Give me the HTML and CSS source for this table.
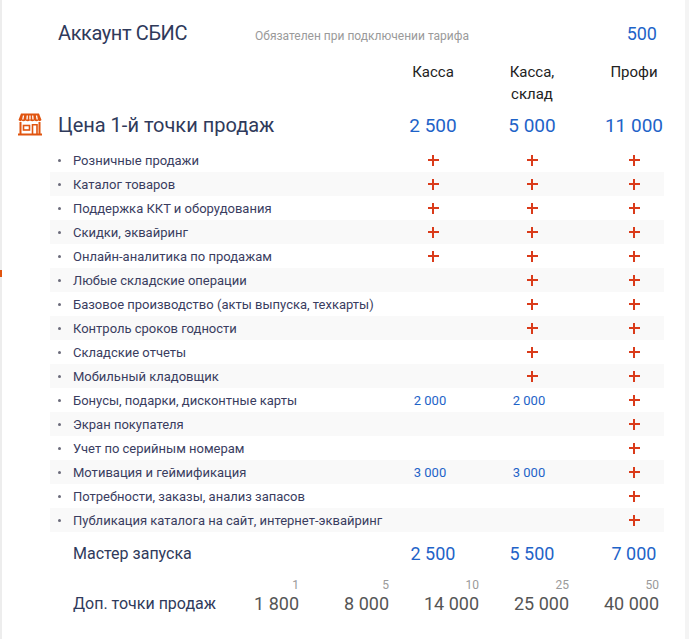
FILE: index.html
```html
<!DOCTYPE html>
<html lang="ru">
<head>
<meta charset="utf-8">
<title>Тарифы</title>
<link rel="stylesheet" href="styles.css">
</head>
<body>
<div class="page">
  <span class="edge-mark"></span>
  <div class="account">
    <span class="acc-title">Аккаунт СБИС</span>
    <span class="acc-note">Обязателен при подключении тарифа</span>
    <span class="acc-price">500</span>
  </div>

  <div class="grid head">
    <div></div>
    <div class="col">Касса</div>
    <div class="col">Касса,<br>склад</div>
    <div class="col">Профи</div>
  </div>

  <div class="grid price">
    <div class="price-label">
      <svg class="shop" width="26" height="24" viewBox="0 0 26 24">
        <path d="M4 1.5 H22 L24.5 8 Q23 10 21.5 8.5 Q19.5 10 17.5 8.5 Q15.3 10 13 8.5 Q10.7 10 8.5 8.5 Q6.5 10 4.5 8.5 Q3 10 1.5 8 Z" fill="#e0540f"/>
        <path d="M6.5 3.5 L5.8 7.5 M10.3 3.5 L10 7.5 M13 3.5 V7.5 M15.7 3.5 L16 7.5 M19.5 3.5 L20.2 7.5" stroke="#fff" stroke-width="1.3"/>
        <path d="M3.5 10 V22.5 M22.5 10 V22.5 M1 22.5 H25" stroke="#e0540f" stroke-width="2" fill="none"/>
        <rect x="6.5" y="13.5" width="6" height="4.5" stroke="#e0540f" stroke-width="1.6" fill="none"/>
        <path d="M15.5 22 V12.8 H20 V22" stroke="#e0540f" stroke-width="1.6" fill="none"/>
      </svg>
      <span>Цена 1-й точки продаж</span>
    </div>
    <div class="num">2 500</div>
    <div class="num">5 000</div>
    <div class="num">11 000</div>
  </div>

  <ul class="features">
    <li class="grid row"><span class="feat">Розничные продажи</span><span class="plus"></span><span class="plus"></span><span class="plus"></span></li>
    <li class="grid row"><span class="feat">Каталог товаров</span><span class="plus"></span><span class="plus"></span><span class="plus"></span></li>
    <li class="grid row"><span class="feat">Поддержка ККТ и оборудования</span><span class="plus"></span><span class="plus"></span><span class="plus"></span></li>
    <li class="grid row"><span class="feat">Скидки, эквайринг</span><span class="plus"></span><span class="plus"></span><span class="plus"></span></li>
    <li class="grid row"><span class="feat">Онлайн-аналитика по продажам</span><span class="plus"></span><span class="plus"></span><span class="plus"></span></li>
    <li class="grid row"><span class="feat">Любые складские операции</span><span class="empty"></span><span class="plus"></span><span class="plus"></span></li>
    <li class="grid row"><span class="feat">Базовое производство (акты выпуска, техкарты)</span><span class="empty"></span><span class="plus"></span><span class="plus"></span></li>
    <li class="grid row"><span class="feat">Контроль сроков годности</span><span class="empty"></span><span class="plus"></span><span class="plus"></span></li>
    <li class="grid row"><span class="feat">Складские отчеты</span><span class="empty"></span><span class="plus"></span><span class="plus"></span></li>
    <li class="grid row"><span class="feat">Мобильный кладовщик</span><span class="empty"></span><span class="plus"></span><span class="plus"></span></li>
    <li class="grid row"><span class="feat">Бонусы, подарки, дисконтные карты</span><span class="small-num">2 000</span><span class="small-num">2 000</span><span class="plus"></span></li>
    <li class="grid row"><span class="feat">Экран покупателя</span><span class="empty"></span><span class="empty"></span><span class="plus"></span></li>
    <li class="grid row"><span class="feat">Учет по серийным номерам</span><span class="empty"></span><span class="empty"></span><span class="plus"></span></li>
    <li class="grid row"><span class="feat">Мотивация и геймификация</span><span class="small-num">3 000</span><span class="small-num">3 000</span><span class="plus"></span></li>
    <li class="grid row"><span class="feat">Потребности, заказы, анализ запасов</span><span class="empty"></span><span class="empty"></span><span class="plus"></span></li>
    <li class="grid row"><span class="feat">Публикация каталога на сайт, интернет-эквайринг</span><span class="empty"></span><span class="empty"></span><span class="plus"></span></li>
  </ul>

  <div class="grid master">
    <div class="master-label">Мастер запуска</div>
    <div class="num">2 500</div>
    <div class="num">5 500</div>
    <div class="num">7 000</div>
  </div>

  <div class="extra">
    <div class="extra-label">Доп. точки продаж</div>
    <div class="tier"><span class="qty">1</span><span class="cost">1 800</span></div>
    <div class="tier"><span class="qty">5</span><span class="cost">8 000</span></div>
    <div class="tier"><span class="qty">10</span><span class="cost">14 000</span></div>
    <div class="tier"><span class="qty">25</span><span class="cost">25 000</span></div>
    <div class="tier"><span class="qty">50</span><span class="cost">40 000</span></div>
  </div>
</div>
</body>
</html>
```

FILE: styles.css
```css
* { box-sizing: border-box; }
html, body { margin: 0; padding: 0; background: #fff; }
body {
  font-family: Roboto, "Liberation Sans", sans-serif;
  color: #323a5a;
}
.page {
  position: relative;
  width: 689px;
  min-height: 639px;
  border-left: 2px solid #ededed;
  border-right: 4px solid #f4f4f4;
  padding: 20px 21px 0 15px;
}
.edge-mark {
  position: absolute;
  left: -2px;
  top: 270px;
  width: 2px;
  height: 7px;
  background: #e0540f;
}
.account {
  display: flex;
  align-items: baseline;
  padding-left: 41px;
  height: 26px;
}
.acc-title {
  font-size: 20px;
  line-height: 26px;
  letter-spacing: -0.4px;
  color: #2f3a5b;
  width: 197px;
}
.acc-note {
  font-size: 12px;
  color: #9a9a9a;
  flex: 1;
}
.acc-price {
  font-size: 18px;
  color: #1e63c8;
  padding-right: 7px;
}
.grid {
  display: grid;
  grid-template-columns: minmax(0, 1fr) 54px 144px 60px;
  align-items: center;
}
.head {
  margin-top: 15px;
}
.col {
  text-align: center;
  font-size: 15px;
  line-height: 22px;
  color: #222;
  align-self: start;
}
.price {
  margin-top: 5px;
  height: 30px;
}
.price-label {
  display: flex;
  align-items: center;
  gap: 15px;
  font-size: 20px;
  color: #2f3a5b;
}
.shop { display: block; margin-top: -2px; }
.num {
  text-align: center;
  font-size: 19px;
  color: #1e63c8;
  white-space: nowrap;
}
.features {
  list-style: none;
  margin: 8px 0 0 33px;
  padding: 0;
}
.row {
  height: 24px;
}
.row:nth-child(even) {
  background: #f9f9f9;
}
.feat {
  position: relative;
  padding-left: 23px;
  font-size: 13px;
  color: #3a3d5f;
  white-space: nowrap;
}
.feat::before {
  content: "";
  position: absolute;
  left: 8px;
  top: 50%;
  width: 3px;
  height: 3px;
  margin-top: -1px;
  border-radius: 50%;
  background: #6b6b7a;
}
.plus {
  position: relative;
  justify-self: center;
  width: 11px;
  height: 11px;
}
.plus::before, .plus::after {
  content: "";
  position: absolute;
  background: #da3b1a;
}
.plus::before { left: 0; right: 0; top: 4.5px; height: 2px; }
.plus::after { top: 0; bottom: 0; left: 4.5px; width: 2px; }
.small-num {
  text-align: center;
  font-size: 13px;
  color: #1e63c8;
  white-space: nowrap;
  margin-left: -6px;
}
.master {
  margin: 6px 0 0 33px;
  height: 30px;
}
.master-label {
  padding-left: 23px;
  font-size: 16px;
  color: #2f3a5b;
}
.master .num { font-size: 18px; }
.extra {
  display: grid;
  grid-template-columns: minmax(0, 1fr) repeat(5, 90px);
  align-items: end;
  margin: 10px 5px 0 33px;
}
.extra-label {
  padding-left: 23px;
  font-size: 16px;
  line-height: 24px;
  color: #2f3a5b;
  white-space: nowrap;
}
.tier {
  display: flex;
  flex-direction: column;
  align-items: flex-end;
}
.qty {
  font-size: 12px;
  line-height: 14px;
  color: #9a9a9a;
}
.cost {
  font-size: 18px;
  line-height: 24px;
  color: #555;
  white-space: nowrap;
}
```
